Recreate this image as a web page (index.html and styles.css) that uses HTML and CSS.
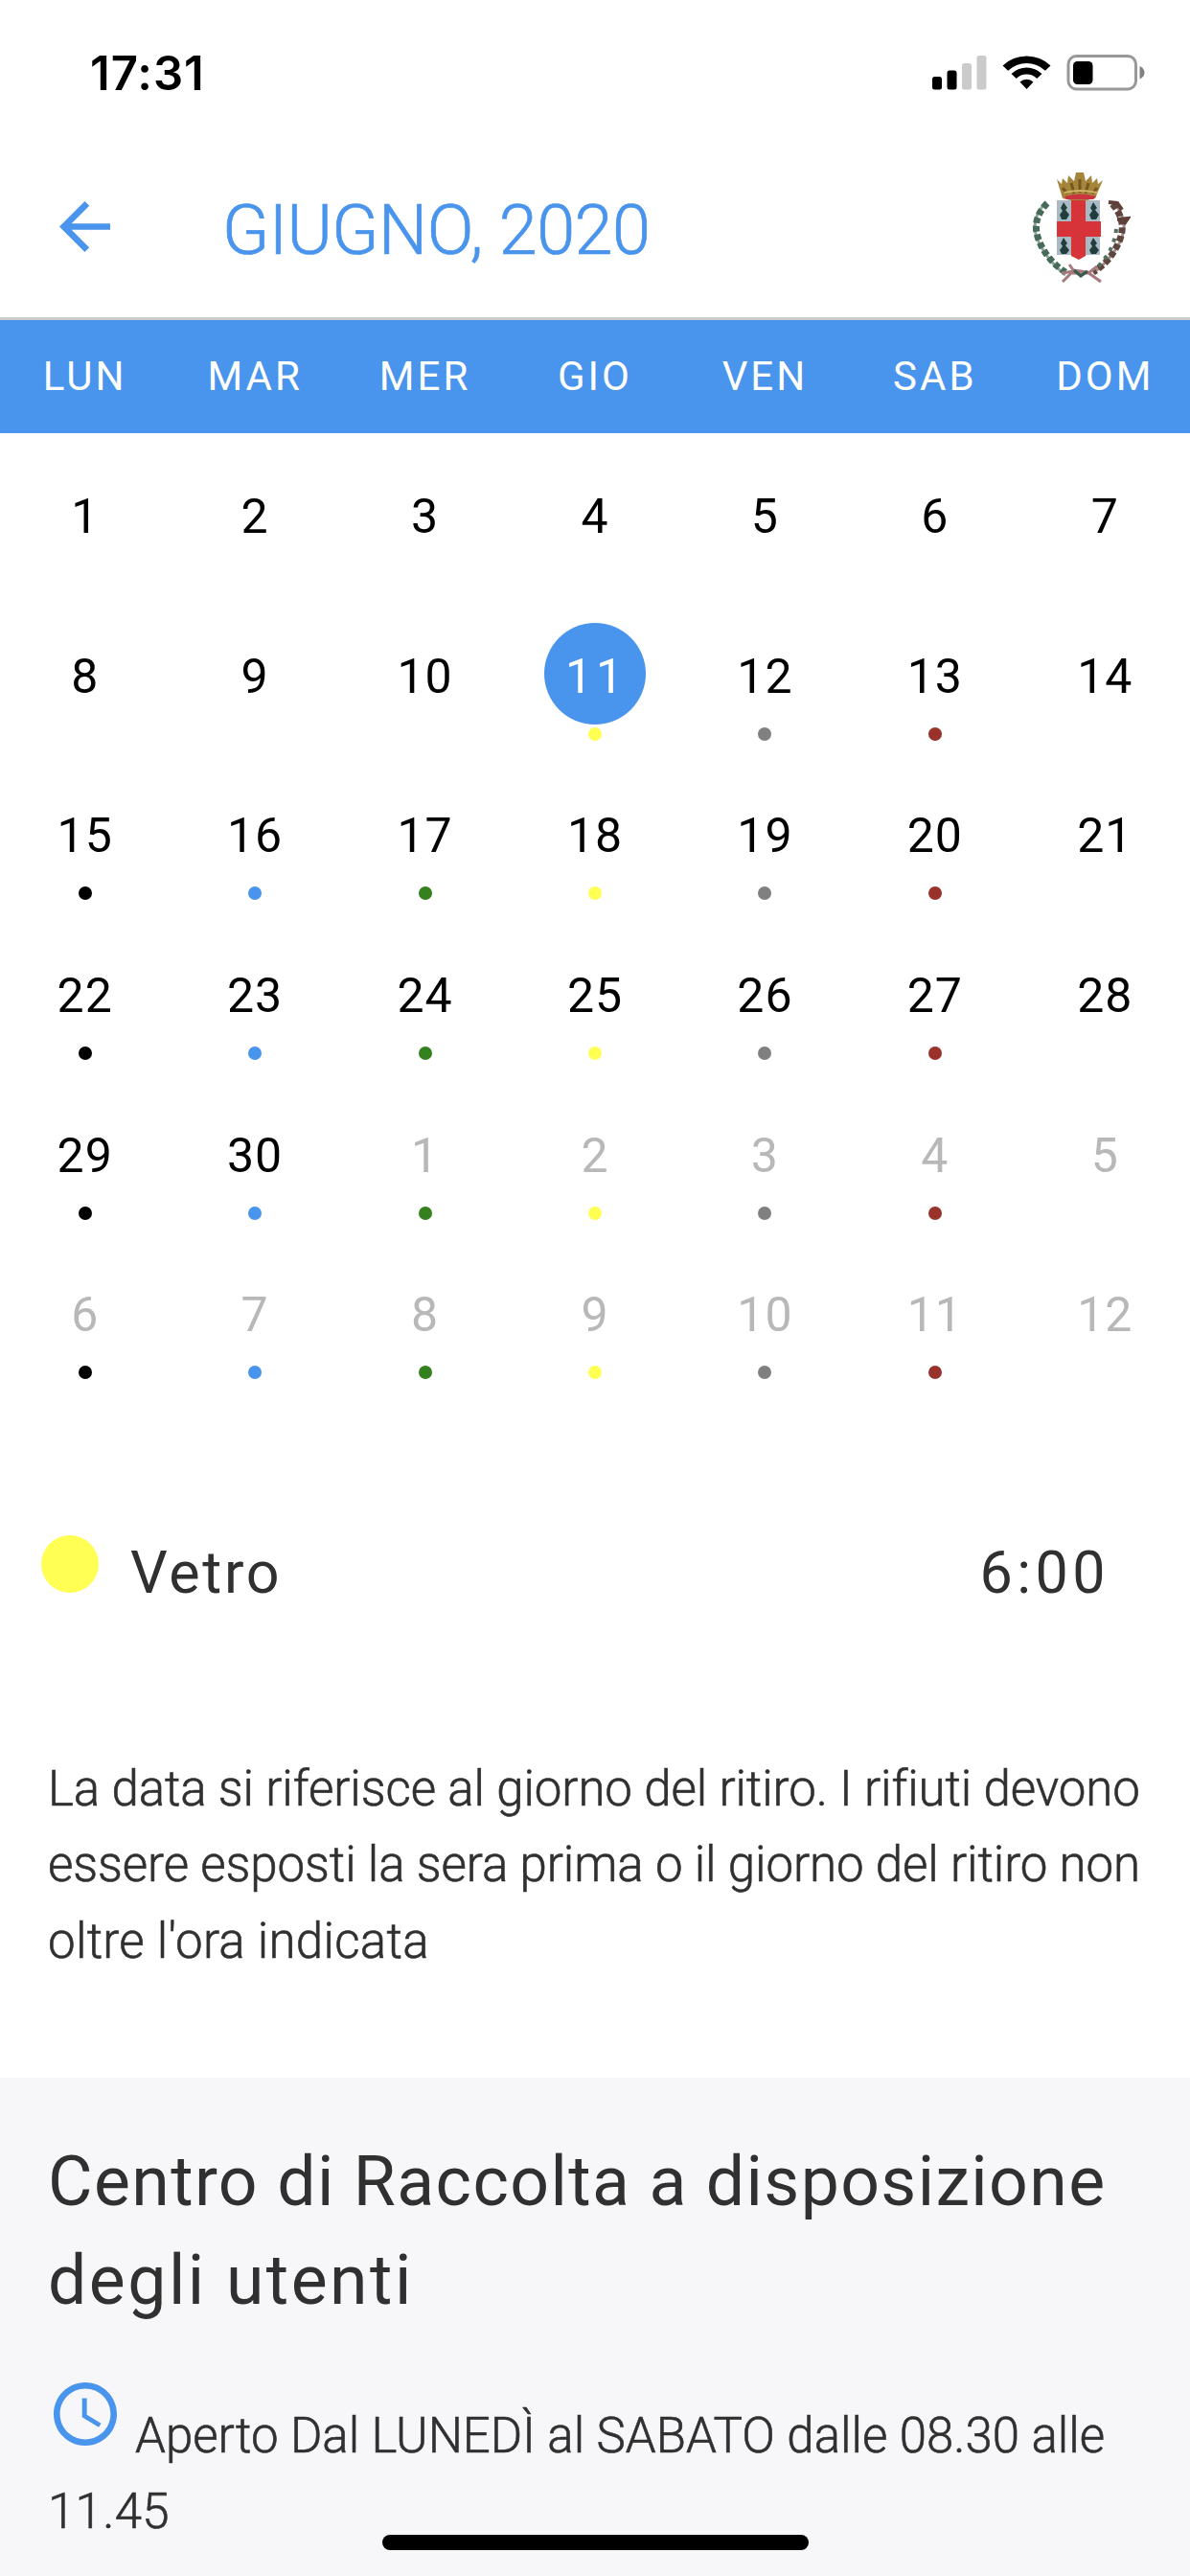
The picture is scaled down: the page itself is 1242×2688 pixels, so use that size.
FILE: index.html
```html
<!DOCTYPE html>
<html lang="it">

<head>
    <meta charset="utf-8">
    <title>Calendario raccolta</title>
    <link rel="stylesheet" href="styles.css">
</head>

<body>
    <!-- status bar -->
    <div class="status">
        <span class="time">17:31</span>
        <svg class="statusIcons" width="222" height="40" viewBox="0 0 222 40">
            <rect x="0" y="24" width="10" height="13.5" rx="2.5"/>
            <rect x="15.5" y="17.5" width="10" height="20" rx="2.5"/>
            <rect x="31" y="10" width="10" height="27.5" rx="2.5" fill="#cbcbcb"/>
            <rect x="46.500" y="2" width="10" height="35.500" rx="2.500" fill="#cbcbcb"/>
            <path d="M73.500 12.500a36 36 0 0 1 50 0l-5.600 5.300a28 28 0 0 0-38.800 0z"/>
            <path d="M82.500 21a23 23 0 0 1 32 0l-5.300 5a15 15 0 0 0-21.400 0z"/>
            <path d="M91.500 29.500a10.500 10.500 0 0 1 14 0l-7 7.500z"/>
            <rect x="142" y="2.500" width="70.500" height="34.500" rx="8.500" fill="none" stroke="#989898" stroke-width="3"/>
            <rect x="147" y="8" width="20.500" height="24" rx="4.500"/>
            <path d="M216.500 13q5 2.500 5 6.800t-5 6.800z" fill="#808080"/>
        </svg>
    </div>

    <div class="header">
        <svg class="back" width="53" height="53" viewBox="4 4 16 16" fill="#4994ec">
            <path d="M20 11H7.830l5.590-5.590L12 4l-8 8 8 8 1.410-1.410L7.830 13H20v-2z"/>
        </svg>
        <span class="month">GIUGNO, 2020</span>
        <!-- town crest -->
        <svg class="crest" width="104" height="120" viewBox="0 0 104 120">
            <path d="M27 10l5 5 1-6 5 5 1-8 6 6 2-9h8l2 9 6-6 1 8 5-5 1 6 5-4-8 19q-17 5-34 0z" fill="#a5853c"/>
            <path d="M33 19l5 6M42 14l3 11M51 10v14M60 14l-3 11M69 19l-5 6" stroke="#75571f" stroke-width="3"/>
            <path d="M35 24q16-4 34 0" stroke="#cfb465" stroke-width="2" fill="none"/>
            <path d="M35 28q16-5 33 0l-3 3H37z" fill="#cb343f"/>
            <path d="M27 32h45v57H58l-8 4-8-4H27z" fill="#a9bac5"/>
            <path d="M42 32h15v22h16v16H57v20l-7 4-8-4V70H27V54h15z" fill="#d7343a"/>
            <g fill="#203f3c">
                <path d="M34 34l4 6-2 2 4 5-3 5h-5l-2-5 3-4-2-3z"/>
                <path d="M65 34l4 6-2 2 4 5-3 5h-5l-2-5 3-4-2-3z"/>
                <path d="M34 71l4 6-2 2 4 5-3 4h-5l-2-4 3-4-2-3z"/>
                <path d="M65 71l4 6-2 2 4 5-3 4h-5l-2-4 3-4-2-3z"/>
            </g>
            <path d="M16 34Q-2 52 7 73t29 37" fill="none" stroke="#8fa39b" stroke-width="3"/>
            <path d="M17 35Q0 52 8 73t28 34" fill="none" stroke="#466b58" stroke-width="7" stroke-dasharray="6 3"/>
            <path d="M86 34Q103 53 94 73t-29 35" fill="none" stroke="#a58f89" stroke-width="3"/>
            <path d="M85 36Q101 54 92 75t-27 32" fill="none" stroke="#5e463f" stroke-width="7" stroke-dasharray="6 3"/>
            <path d="M89 62Q87 84 70 101" fill="none" stroke="#52705d" stroke-width="4" stroke-dasharray="4 6"/>
            <path d="M81 34l9 1 5 7M90 52l11-1-4 6" fill="none" stroke="#604139" stroke-width="4"/>
            <path d="M33 117l12-12 14 2 14 10M32 108l13-2-5-7M43 108h17l9-7" fill="none" stroke="#a5797d" stroke-width="3"/>
            <path d="M45 105l7 6 7-5" fill="none" stroke="#385a4b" stroke-width="3"/>
        </svg>
    </div>

    <div class="week">
        <span>LUN</span><span>MAR</span><span>MER</span><span>GIO</span><span>VEN</span><span>SAB</span><span>DOM</span>
    </div>

    <div class="days">
        <div><b>1</b></div>
        <div><b>2</b></div>
        <div><b>3</b></div>
        <div><b>4</b></div>
        <div><b>5</b></div>
        <div><b>6</b></div>
        <div><b>7</b></div>

        <div><b>8</b></div>
        <div><b>9</b></div>
        <div><b>10</b></div>
        <div class="selected"><b>11</b><i class="yellow"></i></div>
        <div><b>12</b><i class="grey"></i></div>
        <div><b>13</b><i class="red"></i></div>
        <div><b>14</b></div>

        <div><b>15</b><i class="black"></i></div>
        <div><b>16</b><i class="blue"></i></div>
        <div><b>17</b><i class="green"></i></div>
        <div><b>18</b><i class="yellow"></i></div>
        <div><b>19</b><i class="grey"></i></div>
        <div><b>20</b><i class="red"></i></div>
        <div><b>21</b></div>

        <div><b>22</b><i class="black"></i></div>
        <div><b>23</b><i class="blue"></i></div>
        <div><b>24</b><i class="green"></i></div>
        <div><b>25</b><i class="yellow"></i></div>
        <div><b>26</b><i class="grey"></i></div>
        <div><b>27</b><i class="red"></i></div>
        <div><b>28</b></div>

        <div><b>29</b><i class="black"></i></div>
        <div><b>30</b><i class="blue"></i></div>
        <!-- next month -->
        <div class="other"><b>1</b><i class="green"></i></div>
        <div class="other"><b>2</b><i class="yellow"></i></div>
        <div class="other"><b>3</b><i class="grey"></i></div>
        <div class="other"><b>4</b><i class="red"></i></div>
        <div class="other"><b>5</b></div>

        <div class="other"><b>6</b><i class="black"></i></div>
        <div class="other"><b>7</b><i class="blue"></i></div>
        <div class="other"><b>8</b><i class="green"></i></div>
        <div class="other"><b>9</b><i class="yellow"></i></div>
        <div class="other"><b>10</b><i class="grey"></i></div>
        <div class="other"><b>11</b><i class="red"></i></div>
        <div class="other"><b>12</b></div>
    </div>

    <div class="event">
        <span class="eventDot"></span>
        <span class="eventName">Vetro</span>
        <span class="eventTime">6:00</span>
    </div>

    <p class="note">
        La data si riferisce al giorno del ritiro. I rifiuti devono<br>
        essere esposti la sera prima o il giorno del ritiro non<br>
        <span class="last">oltre l'ora indicata</span>
    </p>

    <div class="center">
        <h2>Centro di Raccolta a disposizione<br><span class="h2b">degli utenti</span></h2>
        <p class="hours">
            <svg class="clock" width="66" height="66" viewBox="2 2 20 20" fill="#4994ec">
                <path d="M11.990 2C6.470 2 2 6.480 2 12s4.470 10 9.990 10C17.520 22 22 17.520 22 12S17.520 2 11.990 2zM12 20c-4.420 0-8-3.580-8-8s3.580-8 8-8 8 3.580 8 8-3.580 8-8 8zM12.500 7H11v6l5.250 3.150.750-1.230-4.500-2.670z"/>
            </svg>Aperto Dal LUNEDÌ al SABATO dalle 08.30 alle<br><span class="last">11.45</span>
        </p>
    </div>
    <div class="homeBar"></div>
</body>

</html>
```
FILE: styles.css
```css
* { box-sizing: border-box; }
body {
    margin: 0;
    height: 2688px;
    overflow: hidden;
    display: flex;
    flex-direction: column;
    background: white;
    color: #303030;
    font-family: Roboto, "Open Sans", sans-serif;
}

.status {
    height: 132px;
    padding: 20px 47px 0 94px;
    display: flex;
    align-items: center;
    justify-content: space-between;
    color: black;
}
.time { font: 600 49px Inter, sans-serif; letter-spacing: 1px; }

.header {
    height: 202px;
    padding: 10px 62px 0 62px;
    display: flex;
    align-items: center;
    border-bottom: 3px solid #ccc;
}
.month {
    padding-top: 8px;
    margin-left: 117px;
    font-size: 72px;
    font-weight: 300;
    letter-spacing: -.500px;
    -webkit-text-stroke: .700px #4994ec;
    color: #4994ec;
}
.crest { margin-left: auto; }

.week {
    height: 118px;
    padding-bottom: 2px;
    display: grid;
    grid-template-columns: repeat(7, 1fr);
    align-items: center;
    text-align: center;
    background: #4994ec;
    color: white;
    font-size: 42px;
    letter-spacing: 3px;
}

.days {
    margin-top: 31px;
    height: 1000px;
    display: grid;
    grid-template-columns: repeat(7, 1fr);
    grid-template-rows: repeat(6, 1fr);
    color: black;
}
.days div {
    display: flex;
    flex-direction: column;
    align-items: center;
}
.days b {
    width: 106px;
    height: 106px;
    border-radius: 50%;
    padding-top: 6px;
    line-height: 100px;
    text-align: center;
    font-size: 50px;
    font-weight: 400;
    letter-spacing: 1px;
}
.days i {
    width: 14px;
    height: 14px;
    margin-top: 3px;
    border-radius: 50%;
}
.days .selected b { background: #4994ec; color: white; letter-spacing: 4px; padding-left: 2px; }
.other { color: #b8b8b8; }

.black { background: black; }
.blue { background: #4994ec; }
.green { background: #35801f; }
.yellow { background: #ffff54; }
.grey { background: #808080; }
.red { background: #9a322c; }

.event {
    height: 120px;
    margin-top: 89px;
    padding: 0 84px 0 43px;
    display: flex;
    align-items: center;
}
.eventDot {
    width: 60px;
    height: 60px;
    border-radius: 50%;
    background: #ffff54;
}
.eventName, .eventTime {
    padding-top: 17px;
    font-size: 61px;
    letter-spacing: 2.700px;
}
.eventName { margin-left: 33px; }
.eventTime { margin-left: auto; letter-spacing: 4.500px; }

.note {
    margin: 135px 0 103px;
    padding-left: 50px;
    font-size: 51px;
    font-weight: 300;
    line-height: 79.400px;
    letter-spacing: -.090px;
    -webkit-text-stroke: .600px #303030;
    white-space: nowrap;
}
.last { letter-spacing: .300px; }

.center {
    flex: 1;
    padding: 57px 50px 0;
    background: #f7f7f9;
    white-space: nowrap;
}
h2 {
    margin: 0 0 55px;
    font-size: 71.500px;
    font-weight: 400;
    line-height: 103px;
    letter-spacing: 1.400px;
}
.h2b { letter-spacing: 2.500px; }
.hours {
    margin: 0;
    font-size: 51px;
    font-weight: 300;
    line-height: 79.300px;
    -webkit-text-stroke: .600px #303030;
}
.clock { vertical-align: 6.500px; margin: 0 19px 0 6px; }

/* iOS home indicator, stays over the content */
.homeBar {
    position: fixed;
    left: 399px;
    bottom: 27px;
    width: 445px;
    height: 16px;
    border-radius: 8px;
    background: black;
}
```
